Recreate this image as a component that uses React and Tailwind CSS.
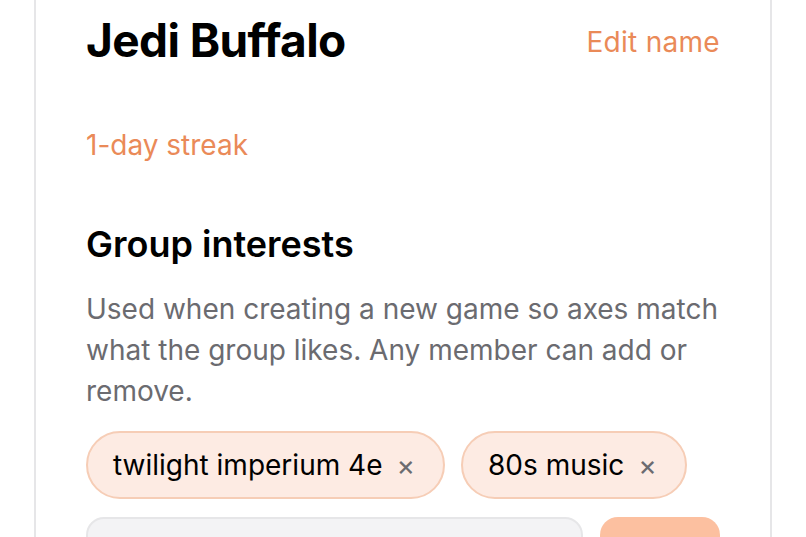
export default function App() {
  const interests = ['twilight imperium 4e', '80s music']

  return (
    <div className="h-[537px] overflow-hidden bg-white" style={{ fontFamily: 'Inter, "Noto Sans", sans-serif' }}>
      <div className="mx-[34px] -mt-[40px] h-[620px] rounded-[28px] border-2 border-[#e6e6e8] px-[50px] pt-[52px]">
        <div className="flex items-center justify-between">
          <h1 className="text-[46px] font-bold leading-[52px] tracking-[-0.6px] text-black">Jedi Buffalo</h1>
          <button className="mt-[3px] text-[28px] leading-[32px] tracking-[0.3px] text-[#ea8a58]">Edit name</button>
        </div>

        <p className="mt-[63px] text-[28px] leading-[32px] text-[#ea8a58]">1-day streak</p>

        <h2 className="mt-[61px] text-[36px] font-semibold leading-[44px] text-black">Group interests</h2>
        <p className="mt-[23px] text-[28px] leading-[41px] text-[#6b6b70]">
          Used when creating a new game so axes match what the group likes. Any member can add or remove.
        </p>

        <div className="mt-[19px] flex flex-wrap gap-[16px]">
          {interests.map((item) => (
            <span
              key={item}
              className="flex h-[68px] items-center gap-[14px] rounded-full border-2 border-[#f6cdb6] bg-[#fdebe3] pl-[25px] pr-[28px] text-[28px] text-black"
            >
              {item}
              <span className="text-[28px] leading-none text-[#6b6b70]">×</span>
            </span>
          ))}
        </div>

        <div className="mt-[18px] flex gap-[17px]">
          <input
            className="h-[68px] flex-1 rounded-[18px] border-2 border-[#e6e6e8] bg-[#f3f3f5] px-[20px] text-[28px]"
            placeholder=""
          />
          <button aria-label="Add" className="h-[68px] w-[120px] rounded-[18px] bg-[#fcc0a0]"></button>
        </div>
      </div>
    </div>
  )
}
